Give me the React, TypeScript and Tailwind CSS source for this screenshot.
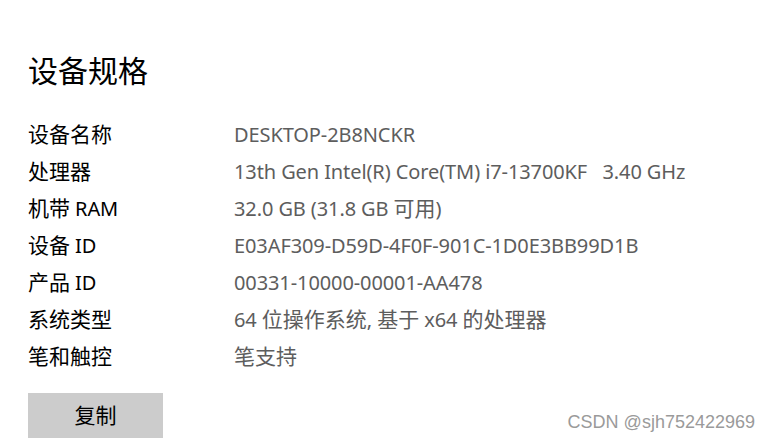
import React from "react";

const rows: [string, string][] = [
  ["设备名称", "DESKTOP-2B8NCKR"],
  ["处理器", "13th Gen Intel(R) Core(TM) i7-13700KF   3.40 GHz"],
  ["机带 RAM", "32.0 GB (31.8 GB 可用)"],
  ["设备 ID", "E03AF309-D59D-4F0F-901C-1D0E3BB99D1B"],
  ["产品 ID", "00331-10000-00001-AA478"],
  ["系统类型", "64 位操作系统, 基于 x64 的处理器"],
  ["笔和触控", "笔支持"],
];

function Mixed({ text }: { text: string }) {
  const parts = text.split(/([\u4e00-\u9fff]+)/).filter((p) => p.length > 0);
  return (
    <>
      {parts.map((p, i) =>
        /[\u4e00-\u9fff]/.test(p) ? (
          <span key={i} className="text-[21px]">
            {p}
          </span>
        ) : (
          <span key={i} className="tracking-[-0.1px]">
            {p}
          </span>
        )
      )}
    </>
  );
}

export default function App() {
  return (
    <div
      className="relative w-[769px] h-[442px] bg-white overflow-hidden pl-[28px] pt-[51px]"
      style={{ fontFamily: '"Noto Sans", "Noto Sans CJK SC", sans-serif' }}
    >
      <h1 className="text-[30px] leading-[40px] text-black font-normal">设备规格</h1>
      <div className="mt-[25px] flex flex-col">
        {rows.map(([k, v]) => (
          <div key={k} className="flex h-[37px] items-center text-[20px] leading-[28px]">
            <div className="w-[206px] text-black">
              <Mixed text={k} />
            </div>
            <div className="text-[#5d5d5d] whitespace-pre">
              <Mixed text={v} />
            </div>
          </div>
        ))}
      </div>
      <button className="mt-[18px] w-[135px] h-[45px] bg-[#cccccc] text-[21px] text-black flex items-center justify-center">
        复制
      </button>
      <div
        className="absolute right-[14px] bottom-[9px] text-[18px] leading-[22px] text-[#9a9a9a]"
        style={{ fontFamily: '"Liberation Sans", Arial, sans-serif' }}
      >
        CSDN @sjh752422969
      </div>
    </div>
  );
}
